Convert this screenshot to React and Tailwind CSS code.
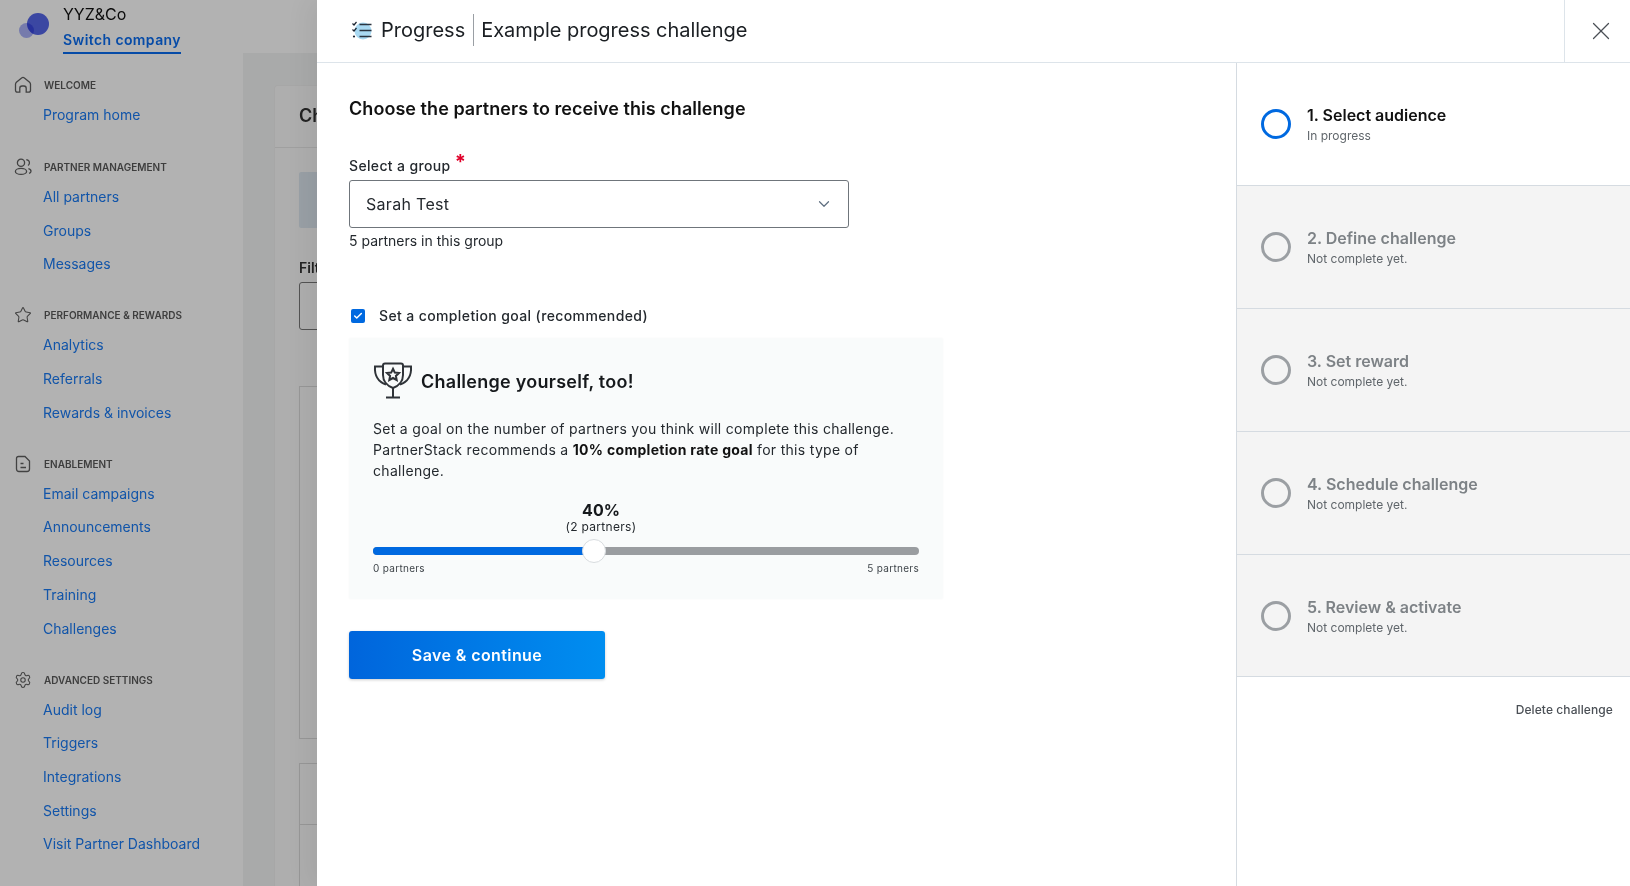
import { Check, ChevronDown, Settings, Star, X } from "lucide-react";

const NAV = [
  { title: "WELCOME", icon: "home", links: ["Program home"] },
  {
    title: "PARTNER MANAGEMENT",
    icon: "users",
    links: ["All partners", "Groups", "Messages"],
  },
  {
    title: "PERFORMANCE & REWARDS",
    icon: "star",
    links: ["Analytics", "Referrals", "Rewards & invoices"],
  },
  {
    title: "ENABLEMENT",
    icon: "file",
    links: ["Email campaigns", "Announcements", "Resources", "Training", "Challenges"],
  },
  {
    title: "ADVANCED SETTINGS",
    icon: "gear",
    links: ["Audit log", "Triggers", "Integrations", "Settings", "Visit Partner Dashboard"],
  },
];

const STEPS = [
  { title: "1. Select audience", sub: "In progress", active: true },
  { title: "2. Define challenge", sub: "Not complete yet." },
  { title: "3. Set reward", sub: "Not complete yet." },
  { title: "4. Schedule challenge", sub: "Not complete yet." },
  { title: "5. Review & activate", sub: "Not complete yet." },
];

function NavIcon({ name }) {
  const cls = "w-[18px] h-[18px] text-[#5f5f5f]";
  if (name === "star") return <Star className={cls} strokeWidth={1.4} />;
  if (name === "gear") return <Settings className={cls} strokeWidth={1.4} />;
  if (name === "home")
    return (
      <svg viewBox="0 0 18 18" fill="none" stroke="currentColor" strokeWidth="1.3" className={cls}>
        <path d="M3.5 16.2C2.2 16.2 1.5 15.5 1.5 14.2V8.2C1.5 7.4 1.8 6.8 2.4 6.2L7.6 1.9C8.5 1.2 9.5 1.2 10.4 1.9L15.6 6.2C16.2 6.8 16.5 7.4 16.5 8.2V14.2C16.5 15.5 15.8 16.2 14.5 16.2H12.2V12.2C12.2 10.9 11.3 10 10 10H8C6.7 10 5.8 10.9 5.8 12.2V16.2Z" />
      </svg>
    );
  if (name === "users")
    return (
      <svg viewBox="0 0 18 18" fill="none" stroke="currentColor" strokeWidth="1.3" className={cls}>
        <circle cx="7" cy="4.8" r="3.6" />
        <ellipse cx="7" cy="13.4" rx="5.6" ry="3" />
        <path d="M12.3 1.6C14.4 2 15.6 3.4 15.4 5.2C15.3 6.2 14.8 7 14 7.5" />
        <path d="M14.4 10.6C16 11 17 12 17 13.2C17 14.2 16.2 15 15 15.4" />
      </svg>
    );
  return (
    <svg viewBox="0 0 18 18" fill="none" stroke="currentColor" strokeWidth="1.3" className={cls}>
      <path d="M4.5 1.5H11L15.5 6V14C15.5 15.6 14.6 16.5 13 16.5H5C3.4 16.5 2.5 15.6 2.5 14V3.5C2.5 2.2 3.2 1.5 4.5 1.5Z" />
      <path d="M6.5 8.5H9.5M6.5 12.5H12" />
    </svg>
  );
}

function ProgressIcon() {
  return (
    <svg viewBox="0 0 22 22" fill="none" className="w-[22px] h-[22px]">
      <circle cx="12" cy="11" r="8.5" fill="#a9d9f2" />
      <path d="M8.5 4.5H20.5M8.5 10.5H20.5M8.5 16.5H20.5" stroke="#2b3440" strokeWidth="1.3" />
      <path d="M1.5 3.5L3 5L5.5 2M1.5 9.5L3 11L5.5 8" stroke="#1b2430" strokeWidth="1.2" />
      <circle cx="3" cy="16.5" r="1.1" fill="#1b2430" />
    </svg>
  );
}

function TrophyIcon() {
  return (
    <svg viewBox="0 0 40 38" fill="none" stroke="#2f3338" strokeWidth="2" className="w-10 h-[38px] shrink-0">
      <path d="M10 4.5H2C1.4 13 5 20 13 22.5" />
      <path d="M30 4.5H38C38.6 13 35 20 27 22.5" />
      <path d="M10 3.5C10 2 11 1.5 12 1.5H28C29 1.5 30 2 30 3.5V13C30 19 26 24 20 26C14 24 10 19 10 13Z" />
      <path d="M20 26V35M13 35.5H27" />
      <path d="M20 6.8L21.8 10.6L26 11.1L22.9 13.9L23.7 18L20 16L16.3 18L17.1 13.9L14 11.1L18.2 10.6Z" />
    </svg>
  );
}

function Sidebar() {
  return (
    <aside className="w-[243px] shrink-0 bg-white">
      <div className="flex h-[53px] pl-[16px]">
        <div className="relative w-[47px] h-[40px] mt-[12px]">
          <span className="absolute left-[3px] top-[11px] w-[15px] h-[15px] rounded-full bg-[#6f7df0] opacity-60" />
          <span className="absolute left-[11px] top-[1px] w-[22px] h-[22px] rounded-full bg-[#5566e8] mix-blend-multiply" />
        </div>
        <div>
          <div className="text-[16px] leading-[20px] text-[#111] mt-[4px]">YYZ&amp;Co</div>
          <div className="text-[14px] leading-[20px] font-semibold text-[#0a6cf0] mt-[6px] pb-[2px] border-b-2 border-[#0a6cf0] w-fit tracking-[0.4px]">
            Switch company
          </div>
        </div>
      </div>
      <nav className="pl-[14px] pt-[22px]">
        {NAV.map((group) => (
          <div key={group.title} className="mb-[31px] first:mb-[32px]">
            <div className="flex items-center h-[20px]">
              <span className="w-[30px] flex">
                <NavIcon name={group.icon} />
              </span>
              <span className="text-[10px] leading-[20px] font-semibold text-[#5a5a5a]">{group.title}</span>
            </div>
            <ul className="mt-[10px] flex flex-col gap-[13.7px] pl-[29px]">
              {group.links.map((link) => (
                <li key={link} className="text-[14px] leading-[20px] text-[#1a7af2] whitespace-nowrap">
                  {link}
                </li>
              ))}
            </ul>
          </div>
        ))}
      </nav>
    </aside>
  );
}

function PageBehind() {
  return (
    <main className="flex-1 bg-[#f3f4f4] mt-[53px] pl-[31px] pt-[32px]">
      <div className="w-[400px] h-[900px] bg-[#fafafa] rounded-[4px] border-l border-t border-[#efefef]">
        <div className="h-[62px] border-b border-[#e6e6e6] pl-[24px] pt-[16px] text-[18px] leading-[28px] font-semibold text-[#333]">
          Challenges
        </div>
        <div className="ml-[24px] mt-[24px] h-[56px] bg-[#dbe6ee] rounded-[2px]" />
        <div className="ml-[24px] mt-[30px] text-[14px] leading-[20px] font-semibold text-[#333]">Filter</div>
        <div className="ml-[24px] mt-[4px] h-[48px] border border-[#777] rounded-[3px]" />
        <div className="ml-[24px] mt-[56px] h-[353px] border border-[#d8d8d8]" />
        <div className="ml-[24px] mt-[24px] h-[200px] border border-[#d8d8d8]">
          <div className="h-[61px] border-b border-[#d8d8d8]" />
        </div>
      </div>
    </main>
  );
}

function StepRow({ step }) {
  return (
    <div
      className={`h-[122.9px] flex border-b border-[#d5dbe1] pl-[24px] pt-[45px] ${
        step.active ? "bg-white" : "bg-[#f4f4f4]"
      }`}
    >
      <span
        className={`w-[30px] h-[30px] rounded-full border-[3px] mt-[1px] shrink-0 ${
          step.active ? "border-[#0069e0]" : "border-[#9b9fa3]"
        }`}
      />
      <div className="ml-[16px] -mt-[5px]">
        <div className={`text-[16px] leading-[24px] font-semibold ${step.active ? "text-[#111]" : "text-[#7d8286]"}`}>
          {step.title}
        </div>
        <div className="text-[12px] leading-[18px] text-[#60666b]">{step.sub}</div>
      </div>
    </div>
  );
}

export default function App() {
  return (
    <div className="relative flex h-screen overflow-hidden bg-white font-['Inter',sans-serif]">
      <Sidebar />
      <PageBehind />
      {/* Backdrop */}
      <div className="absolute inset-0 bg-black/30" />

      {/* Drawer */}
      <section className="absolute inset-y-0 right-0 w-[1313px] bg-white flex flex-col shadow-[-8px_0_24px_rgba(0,0,0,0.06)]">
        <header className="h-[63px] shrink-0 flex border-b border-[#dde4ea]">
          <div className="flex-1 flex items-center pl-[34px]">
            <ProgressIcon />
            <span className="ml-[8px] text-[20px] leading-[28px] text-[#1b1f23] -mt-[2px]">Progress</span>
            <span className="ml-[8px] w-px h-[32px] bg-[#9a9fa4] -mt-[2px]" />
            <span className="ml-[7px] text-[20px] leading-[28px] text-[#1b1f23] tracking-[-0.03px] -mt-[3px]">
              Example progress challenge
            </span>
          </div>
          <div className="w-[66px] border-l border-[#dde4ea] flex items-center">
            <X className="ml-[21px] w-[30px] h-[30px] text-[#4a4f55]" strokeWidth={1} />
          </div>
        </header>

        <div className="flex-1 flex min-h-0">
          <div className="w-[919px] shrink-0 pl-[32px] pt-[33px]">
            <h2 className="text-[18px] leading-[26px] font-semibold text-[#111] tracking-[0.05px]">
              Choose the partners to receive this challenge
            </h2>
            <label className="block h-[20px] mt-[33px] text-[14px] leading-[20px] font-medium text-[#24292e] tracking-[0.35px]">
              Select a group <span className="text-[20px] leading-[14px] font-bold text-[#e0002a] align-[2px]">*</span>
            </label>
            <div className="mt-[5px] w-[500px] h-[48px] border border-[#6f757b] rounded-[3px] flex items-center justify-between pl-[16px] pr-[15px]">
              <span className="text-[16px] text-[#24292e] tracking-[0.3px] -mt-[1px]">Sarah Test</span>
              <ChevronDown className="w-[18px] h-[18px] text-[#5f6f80]" strokeWidth={1.6} />
            </div>
            <p className="mt-[3px] text-[14px] leading-[20px] text-[#24292e]">5 partners in this group</p>

            <div className="mt-[54px] flex items-center h-[20px]">
              <span className="ml-[2px] mt-[1px] w-[14px] h-[14px] rounded-[2px] bg-[#0069e0] flex items-center justify-center">
                <Check className="w-[10px] h-[10px] text-white" strokeWidth={3.5} />
              </span>
              <span className="ml-[14px] text-[14px] font-medium text-[#24292e] tracking-[0.38px]">
                Set a completion goal (recommended)
              </span>
            </div>

            <div className="mt-[13px] w-[594px] h-[261px] bg-[#f9fbfb] rounded-[2px] pt-[24px] px-[24px] shadow-[0_0_2px_rgba(0,0,0,0.04)]">
              <div className="flex items-center h-[38px]">
                <TrophyIcon />
                <span className="ml-[8px] text-[18px] font-semibold text-[#16191c] tracking-[0.26px]">
                  Challenge yourself, too!
                </span>
              </div>
              <p className="mt-[18px] text-[14px] leading-[21px] text-[#24292e] tracking-[0.3px]">
                Set a goal on the number of partners you think will complete this challenge.
                <br />
                PartnerStack recommends a <strong className="font-bold text-[#111]">10% completion rate goal</strong> for
                this type of challenge.
              </p>
              <div className="mt-[19px] text-center w-[456px]">
                <div className="text-[16px] leading-[20px] font-bold text-[#16191c]">40%</div>
                <div className="text-[12px] leading-[14px] text-[#24292e] tracking-[0.3px]">(2 partners)</div>
              </div>
              <div className="relative mt-[13px] w-[546px] h-[8px] rounded-full bg-[#9a9da0]">
                <div className="h-full w-[40%] rounded-l-full bg-[#0069e0]" />
                <span className="absolute left-[209px] -top-[8px] w-[24px] h-[24px] rounded-full bg-white border border-[#d8dcdf]" />
              </div>
              <div className="mt-[6px] flex justify-between text-[10px] leading-[14px] text-[#3f454a] tracking-[0.3px]">
                <span>0 partners</span>
                <span>5 partners</span>
              </div>
            </div>

            <button className="mt-[32px] w-[256px] h-[48px] rounded-[3px] text-white text-[16px] font-semibold tracking-[0.4px] bg-gradient-to-r from-[#0065dc] to-[#008ef0] shadow-[0_1px_3px_rgba(0,0,0,0.2)]">
              Save &amp; continue
            </button>
          </div>

          <aside className="flex-1 border-l border-[#d5dbe1]">
            {STEPS.map((step) => (
              <StepRow key={step.title} step={step} />
            ))}
            <div className="mt-[24px] pr-[17px] text-right text-[12px] leading-[18px] font-medium text-[#4a4f55] tracking-[0.1px]">
              Delete challenge
            </div>
          </aside>
        </div>
      </section>
    </div>
  );
}
